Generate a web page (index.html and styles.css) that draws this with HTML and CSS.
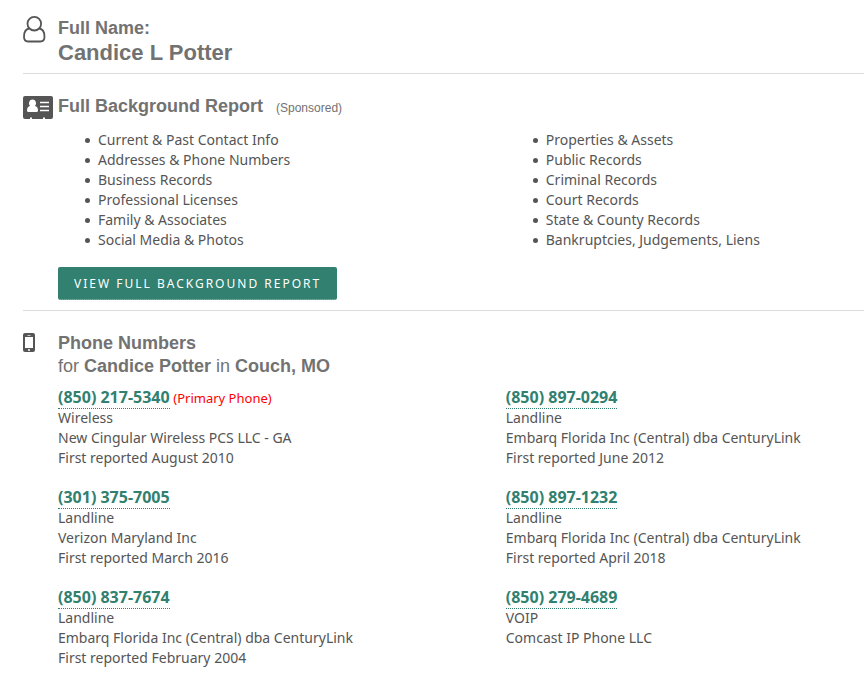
FILE: index.html
```html
<!DOCTYPE html>
<html lang="en">
<head>
  <meta charset="UTF-8">
  <title>Candice L Potter</title>
  <link rel="stylesheet" href="styles.css">
</head>
<body>
  <main class="report">

    <section class="row">
      <div class="icon">
        <svg width="23" height="27" viewBox="0 0 23 27" fill="none" stroke="#555" stroke-width="1.8">
          <path d="M6.200 12.500C2.600 13 1 16.500 1 20.800C1 23.800 2.600 25.500 5 25.500H17.500C20 25.500 21.500 23.800 21.500 20.800C21.500 16.500 20 13 16.300 12.500"/>
          <circle cx="11.300" cy="7.700" r="6.800"/>
        </svg>
      </div>
      <div class="content">
        <h2>Full Name:</h2>
        <h1>Candice L Potter</h1>
      </div>
    </section>

    <section class="row">
      <div class="icon">
        <svg width="30" height="23" viewBox="0 0 30 23">
          <path fill="#555" d="M2 0H28Q30 0 30 2V21Q30 23 28 23H22V21.500H20V23H9V21.500H7V23H2Q0 23 0 21V2Q0 0 2 0Z"/>
          <path fill="#fff" d="M9.500 3.500A3.600 3.800 0 0 1 12 10Q15 10.500 15 14.500Q15 16 13.500 16H5.500Q4 16 4 14.500Q4 10.500 7 10A3.600 3.800 0 0 1 9.500 3.500Z"/>
          <path stroke="#fff" stroke-width="1.6" d="M17 6.500H26M17 10.500H26M17 14.500H26"/>
        </svg>
      </div>
      <div class="content">
        <h2>Full Background Report <span class="sponsored">(Sponsored)</span></h2>
        <div class="columns">
          <ul>
            <li>Current &amp; Past Contact Info</li>
            <li>Addresses &amp; Phone Numbers</li>
            <li>Business Records</li>
            <li>Professional Licenses</li>
            <li>Family &amp; Associates</li>
            <li>Social Media &amp; Photos</li>
          </ul>
          <ul>
            <li>Properties &amp; Assets</li>
            <li>Public Records</li>
            <li>Criminal Records</li>
            <li>Court Records</li>
            <li>State &amp; County Records</li>
            <li>Bankruptcies, Judgements, Liens</li>
          </ul>
        </div>
        <a class="button" href="#">View Full Background Report</a>
      </div>
    </section>

    <section class="row">
      <div class="icon">
        <svg width="12" height="19" viewBox="0 0 12 19">
          <rect width="12" height="19" rx="2" fill="#555"/>
          <rect x="2" y="4" width="8" height="11" fill="#fff"/>
          <path stroke="#ccc" d="M4.500 2.500H7.500"/>
          <circle cx="6" cy="17" r="1" fill="#fff"/>
        </svg>
      </div>
      <div class="content">
        <h2>Phone Numbers</h2>
        <h3>for <b>Candice Potter</b> in <b>Couch, MO</b></h3>
        <div class="columns phones">
          <div>
            <a class="phone" href="#">(850) 217-5340</a> <span class="primary">(Primary Phone)</span><br>
            Wireless<br>
            New Cingular Wireless PCS LLC - GA<br>
            First reported August 2010
          </div>
          <div>
            <a class="phone" href="#">(850) 897-0294</a><br>
            Landline<br>
            Embarq Florida Inc (Central) dba CenturyLink<br>
            First reported June 2012
          </div>
          <div>
            <a class="phone" href="#">(301) 375-7005</a><br>
            Landline<br>
            Verizon Maryland Inc<br>
            First reported March 2016
          </div>
          <div>
            <a class="phone" href="#">(850) 897-1232</a><br>
            Landline<br>
            Embarq Florida Inc (Central) dba CenturyLink<br>
            First reported April 2018
          </div>
          <div>
            <a class="phone" href="#">(850) 837-7674</a><br>
            Landline<br>
            Embarq Florida Inc (Central) dba CenturyLink<br>
            First reported February 2004
          </div>
          <div>
            <a class="phone" href="#">(850) 279-4689</a><br>
            VOIP<br>
            Comcast IP Phone LLC
          </div>
        </div>
      </div>
    </section>

  </main>
</body>
</html>
```
FILE: styles.css
```css
body {
  margin: 0;
  background: #fff;
  color: #555;
  font-family: "Noto Sans", "Open Sans", sans-serif;
  font-size: 14px;
  line-height: 20px;
}

.report {
  padding-left: 23px;
}

.row {
  display: flex;
  padding: 20px 0 10px;
  border-bottom: 1px solid #ddd;
}

.row:first-child {
  padding: 16px 0 8px;
}

.row:last-child {
  border-bottom: 0;
}

.icon {
  flex: 0 0 35px;
}

.icon svg {
  display: block;
}

.row:not(:first-child) .icon {
  padding-top: 2px;
}

.content {
  flex: 1;
}

h1, h2, h3 {
  margin: 0;
  color: #727272;
  font-family: "Liberation Sans", Arial, sans-serif;
}

h1 {
  font-size: 22px;
  line-height: 25px;
}

h2 {
  font-size: 18px;
  line-height: 24px;
}

h3 {
  font-size: 18px;
  font-weight: normal;
  line-height: 22px;
}

.sponsored {
  margin-left: 8px;
  font-size: 12px;
  font-weight: normal;
}

.columns {
  display: grid;
  grid-template-columns: 5fr 4fr;
}

ul {
  margin: 10px 0 17px;
  padding-left: 40px;
  list-style: none;
}

li::before {
  content: "";
  display: inline-block;
  width: 5px;
  height: 5px;
  margin: 0 8px 0 -13px;
  border-radius: 50%;
  background: #555;
  vertical-align: 2px;
}

.button {
  display: inline-block;
  padding: 7px 16px 5px;
  background: #318070;
  border-bottom: 1px dotted #98bfb7;
  border-radius: 2px;
  color: #fff;
  font-size: 12px;
  letter-spacing: 2px;
  text-decoration: none;
  text-transform: uppercase;
}

.phones {
  row-gap: 19px;
  margin-top: 10px;
}

.phone {
  border-bottom: 1px dotted #318070;
  color: #318070;
  font-size: 16px;
  font-weight: bold;
  text-decoration: none;
}

.primary {
  color: #f00;
  font-size: 13px;
}
```
